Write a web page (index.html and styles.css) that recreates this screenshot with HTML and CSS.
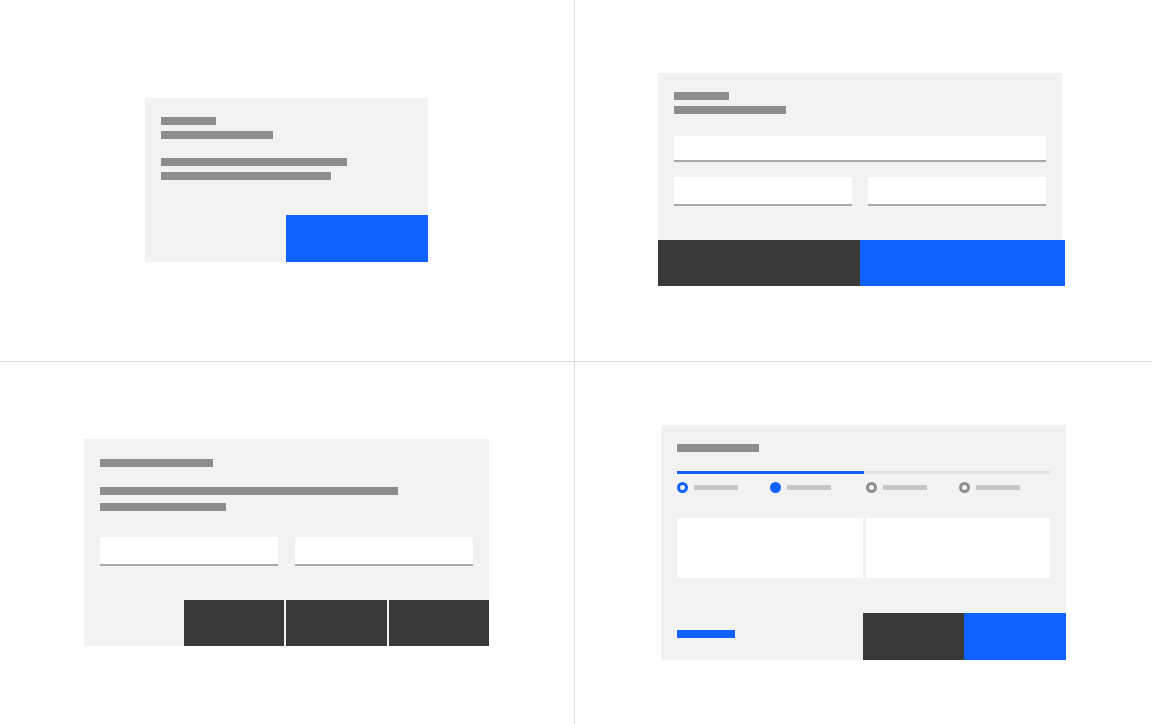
FILE: index.html
```html
<!DOCTYPE html>
<html lang="en">
<head>
  <meta charset="UTF-8">
  <meta name="viewport" content="width=device-width, initial-scale=1.0">
  <title>Modal Patterns</title>
  <link rel="stylesheet" href="styles.css">
</head>
<body>
  <div class="board">

    <!-- passive modal: text + single action -->
    <div class="quadrant q-top q-left">
      <div class="modal modal-passive">
        <div class="modal-body">
          <div class="line" style="width: 55px"></div>
          <div class="line gap-sm" style="width: 112px"></div>
          <div class="line gap-lg" style="width: 186px"></div>
          <div class="line gap-sm" style="width: 170px"></div>
        </div>
        <div class="modal-footer end">
          <div class="btn btn-primary w-142"></div>
        </div>
      </div>
    </div>

    <!-- form modal: inputs + two actions -->
    <div class="quadrant q-top">
      <div class="modal modal-form">
        <div class="modal-body">
          <div class="line" style="width: 55px"></div>
          <div class="line gap-sm" style="width: 112px"></div>
          <div class="field field-full"></div>
          <div class="field-row">
            <div class="field"></div>
            <div class="field"></div>
          </div>
        </div>
        <div class="modal-footer overflow">
          <div class="btn btn-secondary" style="width: 202px"></div>
          <div class="btn btn-primary" style="width: 205px"></div>
        </div>
      </div>
    </div>

    <!-- modal with three actions -->
    <div class="quadrant q-left">
      <div class="modal modal-triple">
        <div class="modal-body">
          <div class="line" style="width: 113px"></div>
          <div class="line gap-md" style="width: 298px"></div>
          <div class="line gap-xs" style="width: 126px"></div>
          <div class="field-row wide">
            <div class="field"></div>
            <div class="field"></div>
          </div>
        </div>
        <div class="modal-footer end split">
          <div class="btn btn-secondary"></div>
          <div class="btn btn-secondary"></div>
          <div class="btn btn-secondary"></div>
        </div>
      </div>
    </div>

    <!-- multi-step modal -->
    <div class="quadrant">
      <div class="modal modal-steps">
        <div class="modal-body">
          <div class="line" style="width: 82px"></div>
          <div class="progress">
            <div class="progress-fill" style="width: 50%"></div>
          </div>
          <div class="steps">
            <div class="step"><span class="dot current"></span><span class="step-label"></span></div>
            <div class="step"><span class="dot done"></span><span class="step-label"></span></div>
            <div class="step"><span class="dot"></span><span class="step-label"></span></div>
            <div class="step"><span class="dot"></span><span class="step-label"></span></div>
          </div>
          <div class="tiles">
            <div class="tile"></div>
            <div class="tile"></div>
          </div>
        </div>
        <div class="modal-footer steps-footer">
          <div class="link"></div>
          <div class="btn btn-secondary" style="width: 101px"></div>
          <div class="btn btn-primary" style="width: 102px"></div>
        </div>
      </div>
    </div>

  </div>
</body>
</html>
```

FILE: styles.css
```css
* {
  box-sizing: border-box;
}

body {
  margin: 0;
  background-color: #ffffff;
  font-family: "Liberation Sans", Arial, sans-serif;
}

.board {
  display: grid;
  grid-template-columns: 575px 1fr;
  grid-template-rows: 362px 1fr;
  height: 100vh;
}

.quadrant {
  display: flex;
  align-items: center;
  justify-content: center;
  padding-bottom: 1px;
}

.q-top {
  border-bottom: 1px solid #dcdcdc;
}

.q-left {
  border-right: 1px solid #dcdcdc;
  padding-right: 1px;
}

/* modal shell */
.modal {
  display: flex;
  flex-direction: column;
  background-color: #f2f2f2;
}

.modal-body {
  padding: 19px 16px 0 16px;
}

.modal-footer {
  display: flex;
  margin-top: auto;
}

.modal-footer.end {
  justify-content: flex-end;
}

.modal-passive {
  width: 283px;
  height: 164px;
}

.modal-form {
  width: 404px;
  height: 213px;
  margin-right: 7px;
  margin-bottom: 1px;
}

.modal-footer.overflow {
  margin-right: -3px;
}

.modal-triple {
  width: 405px;
  height: 207px;
}

.modal-triple .modal-body {
  padding-top: 20px;
}

.modal-footer.split {
  gap: 2px;
}

.modal-footer.split .btn {
  width: 100.33px;
}

.modal-steps {
  width: 405px;
  height: 235px;
}

/* placeholder text lines */
.line {
  height: 8px;
  background-color: #8d8d8d;
}

.gap-xs {
  margin-top: 8px;
}

.gap-sm {
  margin-top: 6px;
}

.gap-md {
  margin-top: 20px;
}

.gap-lg {
  margin-top: 19px;
}

/* buttons */
.btn {
  height: 46px;
}

.modal-passive .btn,
.modal-steps .btn {
  height: 47px;
}

.w-142 {
  width: 142px;
}

.btn-primary {
  background-color: #0f62fe;
}

.btn-secondary {
  background-color: #393939;
}

/* inputs */
.field {
  height: 29px;
  background-color: #ffffff;
  border-bottom: 2px solid #a8a8a8;
}

.field-full {
  height: 26px;
  margin-top: 22px;
}

.field-row {
  display: grid;
  grid-template-columns: 1fr 1fr;
  gap: 16px;
  margin-top: 15px;
}

.field-row.wide {
  gap: 17px;
  margin-top: 26px;
}

/* progress indicator */
.progress {
  height: 3px;
  margin-top: 19px;
  background-color: #e0e0e0;
}

.progress-fill {
  height: 100%;
  background-color: #0f62fe;
}

.steps {
  display: grid;
  grid-template-columns: 93px 96px 93px 1fr;
  margin-top: 8px;
}

.step {
  display: flex;
  align-items: center;
  gap: 6px;
}

.dot {
  width: 11px;
  height: 11px;
  border-radius: 50%;
  border: 3px solid #8d8d8d;
}

.dot.current {
  border-color: #0f62fe;
}

.dot.done {
  background-color: #0f62fe;
  border-color: #0f62fe;
}

.step-label {
  width: 44px;
  height: 5px;
  background-color: #c6c6c6;
}

.tiles {
  display: grid;
  grid-template-columns: 186px 1fr;
  gap: 3px;
  margin-top: 25px;
}

.tile {
  height: 60px;
  background-color: #ffffff;
}

.steps-footer {
  align-items: flex-end;
}

.link {
  width: 58px;
  height: 8px;
  margin: 0 auto 22px 16px;
  background-color: #0f62fe;
}
```
